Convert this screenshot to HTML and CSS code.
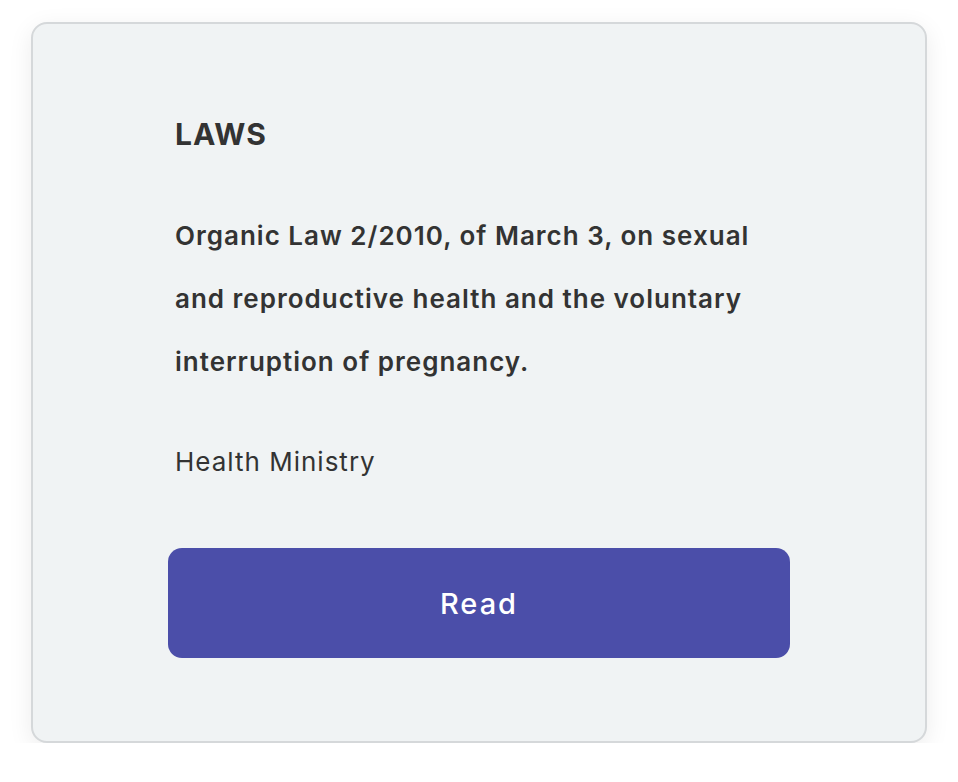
FILE: index.html
```html
<!DOCTYPE html>
<html lang="en">
<head>
<meta charset="utf-8">
<link rel="stylesheet" href="styles.css">
</head>
<body>
<div class="card">
  <div class="content">
    <h2 class="label">LAWS</h2>
    <p class="title">Organic Law 2/2010, of March 3, on sexual and reproductive health and the voluntary interruption of pregnancy.</p>
    <p class="source">Health Ministry</p>
    <button class="btn">Read</button>
  </div>
</div>
</body>
</html>
```
FILE: styles.css
```css
* { box-sizing: border-box; }
html, body { margin: 0; padding: 0; background: #ffffff; }
body {
  font-family: Inter, "Noto Sans", sans-serif;
  color: #333333;
  padding: 22px 31px 0 31px;
}
.card {
  width: 896px;
  height: 721px;
  background: #f0f3f4;
  border: 2px solid #d5d8da;
  border-radius: 16px;
  box-shadow: 0 6px 24px rgba(0, 0, 0, 0.08);
  display: flex;
  justify-content: center;
}
.content {
  width: 622px;
  padding-top: 90px;
}
.label {
  margin: 0 0 0 7px;
  font-size: 30px;
  font-weight: 700;
  line-height: 40px;
  letter-spacing: 1px;
}
.title {
  margin: 50px 0 0 7px;
  max-width: 600px;
  font-size: 26px;
  font-weight: 600;
  line-height: 63px;
  letter-spacing: 1px;
}
.source {
  margin: 49px 0 0 7px;
  font-size: 26px;
  font-weight: 400;
  line-height: 40px;
  letter-spacing: 1px;
}
.btn {
  display: block;
  width: 622px;
  height: 110px;
  margin-top: 66px;
  border: none;
  border-radius: 14px;
  background: #4b4ea9;
  color: #ffffff;
  font-family: Inter, "Noto Sans", sans-serif;
  font-size: 29px;
  font-weight: 500;
  letter-spacing: 2px;
}
```
